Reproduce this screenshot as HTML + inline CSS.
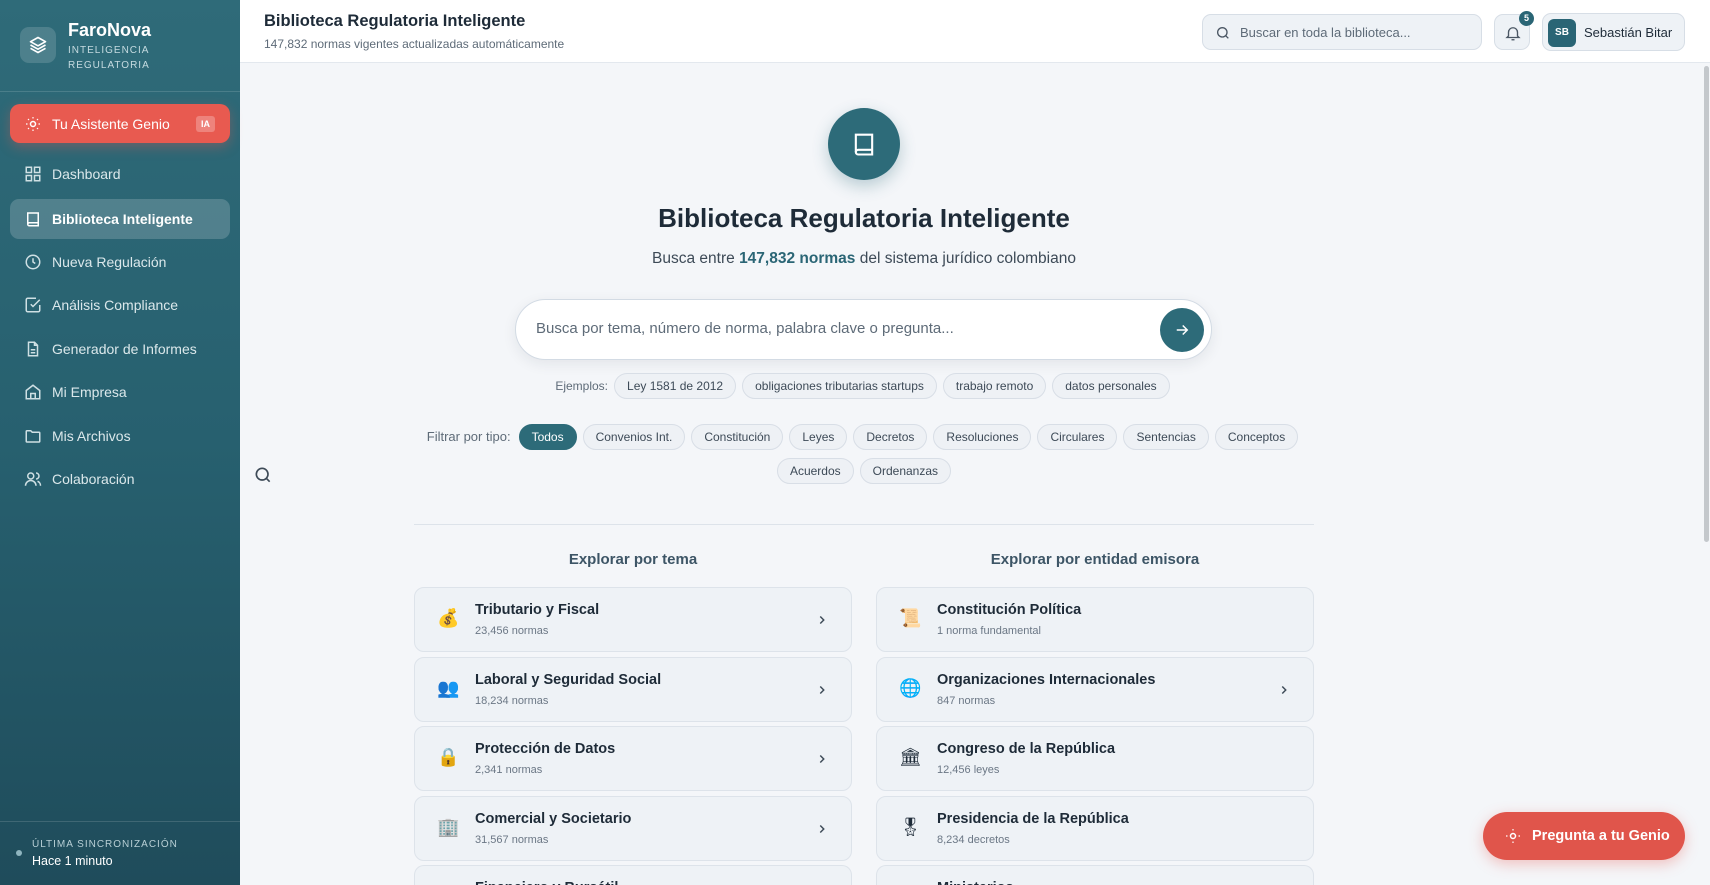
<!DOCTYPE html>
<html style="overflow:hidden;width:1710px;height:885px"><head><meta charset="utf-8"><style>
*{box-sizing:border-box;margin:0;padding:0}
body{width:1710px;height:885px;overflow:hidden;font-family:"Liberation Sans","Noto Sans CJK SC",sans-serif;background:#f4f6f9;position:relative;color:#1e2b38}
.wrap{position:absolute;left:0;top:0;width:1710px;height:885px;overflow:hidden}
.sb{position:absolute;left:0;top:0;width:240px;height:885px;background:linear-gradient(180deg,#2f6b79 0%,#27606f 50%,#1f4c5b 100%);color:#fff}
.logo{position:absolute;left:20px;top:27px;width:36px;height:36px;border-radius:9px;background:rgba(255,255,255,.15);display:flex;align-items:center;justify-content:center}
.brand{position:absolute;left:68px;top:20px;font-size:18px;font-weight:bold}
.sub{position:absolute;left:68px;top:43px;font-size:10px;letter-spacing:1px;line-height:15px;color:#c5dbe0}
.div1{position:absolute;left:0;top:91px;width:240px;height:1px;background:rgba(255,255,255,.14)}
.genio{position:absolute;left:10px;top:104px;width:220px;height:39px;border-radius:10px;background:#e85a50;box-shadow:0 4px 12px rgba(232,90,80,.35);font-size:14px;display:flex;align-items:center;padding-left:42px}
.genio .ia{position:absolute;right:15px;top:12px;background:rgba(255,255,255,.25);font-size:9px;font-weight:bold;padding:3px 5px;border-radius:3px}
.nav{position:absolute;left:10px;width:220px;height:40px;border-radius:9px;display:flex;align-items:center;padding-left:42px;font-size:14px;color:#dbe8eb}
.nav svg{position:absolute;left:14px;top:11px}
.nav.act{background:rgba(255,255,255,.18);color:#fff;font-weight:bold}
.div2{position:absolute;left:0;top:821px;width:240px;height:1px;background:rgba(255,255,255,.14)}
.hd{position:absolute;left:240px;top:0;width:1470px;height:63px;background:#fff;border-bottom:1px solid #e3e8ee}
.chip{display:inline-block;height:26px;line-height:24px;padding:0 12px;border:1px solid #d8dee6;border-radius:13px;background:#eef1f5;font-size:12px;color:#3d4a57;margin:0 3px}
.card{position:absolute;width:438px;height:65px;border:1px solid #dde3ea;border-radius:10px;background:#eef2f6}
.card.last{height:20px;border-bottom:none;border-radius:10px 10px 0 0;overflow:hidden}
.card .ic{position:absolute;left:22px;top:20px;font-size:18px}
.card .t{position:absolute;left:60px;top:14px;font-size:14.5px;font-weight:bold;color:#1e2b38}
.card .n{position:absolute;left:60px;top:37px;font-size:11px;color:#6b7785}
.card .ch{position:absolute;right:22px;top:25px}
</style></head><body><div class="wrap">
<div class="sb">
 <div class="logo"><svg width="20" height="20" viewBox="0 0 24 24" fill="none" stroke="#fff" stroke-width="2" stroke-linejoin="round"><path d="M12 3 3 8l9 5 9-5z"/><path d="m3 12 9 5 9-5"/><path d="m3 16 9 5 9-5"/></svg></div>
 <div class="brand">FaroNova</div>
 <div class="sub">INTELIGENCIA<br>REGULATORIA</div>
 <div class="div1"></div>
 <div class="genio"><svg style="position:absolute;left:15px;top:12px" width="16" height="16" viewBox="0 0 16 16" fill="none" stroke="#fff" stroke-width="1.5"><circle cx="8" cy="8" r="2.5"/><path d="M8 1v1.5M8 13.5V15M1 8h1.5M13.5 8H15M3 3l1 1M12 12l1 1M3 13l1-1M12 4l1-1" stroke-width="1.2"/></svg>Tu Asistente Genio<span class="ia">IA</span></div>
 <div class="nav" style="top:154px"><svg width="18" height="18" viewBox="0 0 24 24" fill="none" stroke="#cfe0e4" stroke-width="2"><rect x="3" y="3" width="7" height="7"/><rect x="14" y="3" width="7" height="7"/><rect x="3" y="14" width="7" height="7"/><rect x="14" y="14" width="7" height="7"/></svg>Dashboard</div>
 <div class="nav act" style="top:199px"><svg width="18" height="18" viewBox="0 0 24 24" fill="none" stroke="#fff" stroke-width="2"><path d="M5 4h14v17H7a2 2 0 0 1-2-2z"/><path d="M5 19a2 2 0 0 1 2-2h12"/></svg>Biblioteca Inteligente</div>
 <div class="nav" style="top:242px"><svg width="18" height="18" viewBox="0 0 24 24" fill="none" stroke="#cfe0e4" stroke-width="2"><circle cx="12" cy="12" r="9"/><path d="M12 7v5l3 2"/></svg>Nueva Regulación</div>
 <div class="nav" style="top:285px"><svg width="18" height="18" viewBox="0 0 24 24" fill="none" stroke="#cfe0e4" stroke-width="2"><path d="M21 12v7a2 2 0 0 1-2 2H5a2 2 0 0 1-2-2V5a2 2 0 0 1 2-2h11"/><path d="m9 11 3 3 9-9"/></svg>Análisis Compliance</div>
 <div class="nav" style="top:329px"><svg width="18" height="18" viewBox="0 0 24 24" fill="none" stroke="#cfe0e4" stroke-width="2"><path d="M14 3H6v18h12V7z"/><path d="M14 3v4h4M9 13h6M9 17h6"/></svg>Generador de Informes</div>
 <div class="nav" style="top:372px"><svg width="18" height="18" viewBox="0 0 24 24" fill="none" stroke="#cfe0e4" stroke-width="2"><path d="M3 10 12 3l9 7v11H3z"/><path d="M9 21v-7h6v7"/></svg>Mi Empresa</div>
 <div class="nav" style="top:416px"><svg width="18" height="18" viewBox="0 0 24 24" fill="none" stroke="#cfe0e4" stroke-width="2"><path d="M3 6a1 1 0 0 1 1-1h5l2 2h9a1 1 0 0 1 1 1v11a1 1 0 0 1-1 1H4a1 1 0 0 1-1-1z"/></svg>Mis Archivos</div>
 <div class="nav" style="top:459px"><svg width="18" height="18" viewBox="0 0 24 24" fill="none" stroke="#cfe0e4" stroke-width="2"><circle cx="9" cy="8" r="4"/><path d="M2 21a7 7 0 0 1 14 0M16 4a4 4 0 0 1 0 8M22 21a6 6 0 0 0-4-6"/></svg>Colaboración</div>
 <div class="div2"></div>
 <div style="position:absolute;left:16px;top:850px;width:6px;height:6px;border-radius:3px;background:#8fb5bf"></div>
 <div style="position:absolute;left:32px;top:839px;font-size:10px;letter-spacing:1px;color:#b8cfd5">ÚLTIMA SINCRONIZACIÓN</div>
 <div style="position:absolute;left:32px;top:854px;font-size:12.5px;color:#fff">Hace 1 minuto</div>
</div>
<div class="hd">
 <div style="position:absolute;left:24px;top:12px;font-size:16.5px;font-weight:bold;color:#1e2b38">Biblioteca Regulatoria Inteligente</div>
 <div style="position:absolute;left:24px;top:37px;font-size:12px;color:#5e6b78">147,832 normas vigentes actualizadas automáticamente</div>
 <div style="position:absolute;left:962px;top:14px;width:280px;height:36px;border:1px solid #d7dee6;border-radius:9px;background:#eef2f6"><svg style="position:absolute;left:12px;top:10px" width="16" height="16" viewBox="0 0 24 24" fill="none" stroke="#4a5663" stroke-width="2"><circle cx="11" cy="11" r="7"/><path d="m20 20-4-4"/></svg><span style="position:absolute;left:37px;top:10px;font-size:13px;color:#5e6b78">Buscar en toda la biblioteca...</span></div>
 <div style="position:absolute;left:1254px;top:14px;width:36px;height:36px;border:1px solid #d7dee6;border-radius:9px;background:#eef2f6"><svg style="position:absolute;left:9px;top:9px" width="18" height="18" viewBox="0 0 24 24" fill="none" stroke="#4a5663" stroke-width="1.8"><path d="M6 16V11a6 6 0 0 1 12 0v5l2 2H4z"/><path d="M10 21h4"/></svg><span style="position:absolute;left:24px;top:-4px;width:15px;height:15px;border-radius:8px;background:#2a6575;color:#fff;font-size:9px;font-weight:bold;text-align:center;line-height:15px">5</span></div>
 <div style="position:absolute;left:1302px;top:13px;width:143px;height:38px;border:1px solid #d7dee6;border-radius:9px;background:#eef2f6"><span style="position:absolute;left:5px;top:5px;width:28px;height:28px;border-radius:6px;background:#2a6575;color:#fff;font-size:10px;font-weight:bold;text-align:center;line-height:28px">SB</span><span style="position:absolute;left:41px;top:11px;font-size:13px;color:#1e2b38">Sebastián Bitar</span></div>
</div>
<div style="position:absolute;right:1px;top:66px;width:5px;height:476px;border-radius:3px;background:#c4c8cc"></div>
<svg style="position:absolute;left:253px;top:465px" width="20" height="20" viewBox="0 0 24 24" fill="none" stroke="#3d4a57" stroke-width="2"><circle cx="11" cy="11" r="7"/><path d="m20 20-4-4"/></svg>
<div style="position:absolute;left:828px;top:108px;width:72px;height:72px;border-radius:36px;background:#2d6b79;box-shadow:0 6px 16px rgba(45,107,121,.3)"><svg style="position:absolute;left:22px;top:22px" width="28" height="28" viewBox="0 0 24 24" fill="none" stroke="#fff" stroke-width="1.8"><path d="M5 4h14v17H7a2 2 0 0 1-2-2z"/><path d="M5 19a2 2 0 0 1 2-2h12"/></svg></div>
<div style="position:absolute;left:240px;width:1248px;top:203px;text-align:center;font-size:26px;font-weight:bold;color:#1e2b38">Biblioteca Regulatoria Inteligente</div>
<div style="position:absolute;left:240px;width:1248px;top:250px;text-align:center;font-size:15.5px;color:#3d4a57">Busca entre <b style="color:#2a6575">147,832 normas</b> del sistema jurídico colombiano</div>
<div style="position:absolute;left:515px;top:299px;width:697px;height:61px;border-radius:31px;background:#fff;border:1.5px solid #d3dbe4;box-shadow:0 4px 14px rgba(30,43,56,.08)"><span style="position:absolute;left:20px;top:20px;font-size:15px;color:#5e6b78">Busca por tema, número de norma, palabra clave o pregunta...</span><div style="position:absolute;right:7px;top:8px;width:44px;height:44px;border-radius:22px;background:#2d6b79"><svg style="position:absolute;left:13px;top:13px" width="18" height="18" viewBox="0 0 24 24" fill="none" stroke="#fff" stroke-width="2"><path d="M5 12h14M13 6l6 6-6 6"/></svg></div></div>
<div style="position:absolute;left:240px;width:1248px;top:373px;text-align:center;font-size:12px;color:#5e6b78"><span style="margin-right:3px">Ejemplos:</span><span class="chip">Ley 1581 de 2012</span><span class="chip">obligaciones tributarias startups</span><span class="chip">trabajo remoto</span><span class="chip">datos personales</span></div>
<div style="position:absolute;left:410px;width:908px;top:420px;text-align:center;font-size:13px;color:#5e6b78;line-height:34px"><span style="margin-right:5px">Filtrar por tipo:</span><span class="chip" style="background:#2d6b79;color:#fff;border-color:#2d6b79">Todos</span><span class="chip">Convenios Int.</span><span class="chip">Constitución</span><span class="chip">Leyes</span><span class="chip">Decretos</span><span class="chip">Resoluciones</span><span class="chip">Circulares</span><span class="chip">Sentencias</span><span class="chip">Conceptos</span><br><span class="chip">Acuerdos</span><span class="chip">Ordenanzas</span></div>
<div style="position:absolute;left:414px;top:524px;width:900px;height:1px;background:#dde3ea"></div>
<div style="position:absolute;left:414px;width:438px;top:551px;text-align:center;font-size:15px;font-weight:bold;color:#3d5566">Explorar por tema</div>
<div style="position:absolute;left:876px;width:438px;top:551px;text-align:center;font-size:15px;font-weight:bold;color:#3d5566">Explorar por entidad emisora</div>

<div class="card" style="left:414px;top:587px"><span class="ic">💰</span><span class="t">Tributario y Fiscal</span><span class="n">23,456 normas</span><svg class="ch" width="14" height="14" viewBox="0 0 24 24" fill="none" stroke="#3d4a57" stroke-width="2.5"><path d="m9 6 6 6-6 6"/></svg></div>
<div class="card" style="left:414px;top:657px"><span class="ic">👥</span><span class="t">Laboral y Seguridad Social</span><span class="n">18,234 normas</span><svg class="ch" width="14" height="14" viewBox="0 0 24 24" fill="none" stroke="#3d4a57" stroke-width="2.5"><path d="m9 6 6 6-6 6"/></svg></div>
<div class="card" style="left:414px;top:726px"><span class="ic">🔒</span><span class="t">Protección de Datos</span><span class="n">2,341 normas</span><svg class="ch" width="14" height="14" viewBox="0 0 24 24" fill="none" stroke="#3d4a57" stroke-width="2.5"><path d="m9 6 6 6-6 6"/></svg></div>
<div class="card" style="left:414px;top:796px"><span class="ic">🏢</span><span class="t">Comercial y Societario</span><span class="n">31,567 normas</span><svg class="ch" width="14" height="14" viewBox="0 0 24 24" fill="none" stroke="#3d4a57" stroke-width="2.5"><path d="m9 6 6 6-6 6"/></svg></div>
<div class="card last" style="left:414px;top:865px"><span class="t">Financiero y Bursátil</span></div>

<div class="card" style="left:876px;top:587px"><span class="ic">📜</span><span class="t">Constitución Política</span><span class="n">1 norma fundamental</span></div>
<div class="card" style="left:876px;top:657px"><span class="ic">🌐</span><span class="t">Organizaciones Internacionales</span><span class="n">847 normas</span><svg class="ch" width="14" height="14" viewBox="0 0 24 24" fill="none" stroke="#3d4a57" stroke-width="2.5"><path d="m9 6 6 6-6 6"/></svg></div>
<div class="card" style="left:876px;top:726px"><span class="ic">🏛</span><span class="t">Congreso de la República</span><span class="n">12,456 leyes</span></div>
<div class="card" style="left:876px;top:796px"><span class="ic">🎖</span><span class="t">Presidencia de la República</span><span class="n">8,234 decretos</span></div>
<div class="card last" style="left:876px;top:865px"><span class="t">Ministerios</span></div>

<div style="position:absolute;left:1483px;top:812px;width:202px;height:48px;border-radius:24px;background:#e0554b;box-shadow:0 4px 14px rgba(232,90,80,.35);color:#fff;font-size:14.5px;font-weight:bold;line-height:48px;padding-left:49px"><svg style="position:absolute;left:22px;top:16px" width="16" height="16" viewBox="0 0 16 16" fill="none" stroke="#fff" stroke-width="1.5"><circle cx="8" cy="8" r="2.5"/><path d="M8 1v1.5M8 13.5V15M1 8h1.5M13.5 8H15" stroke-width="1.2"/></svg>Pregunta a tu Genio</div>
</div></body></html>
